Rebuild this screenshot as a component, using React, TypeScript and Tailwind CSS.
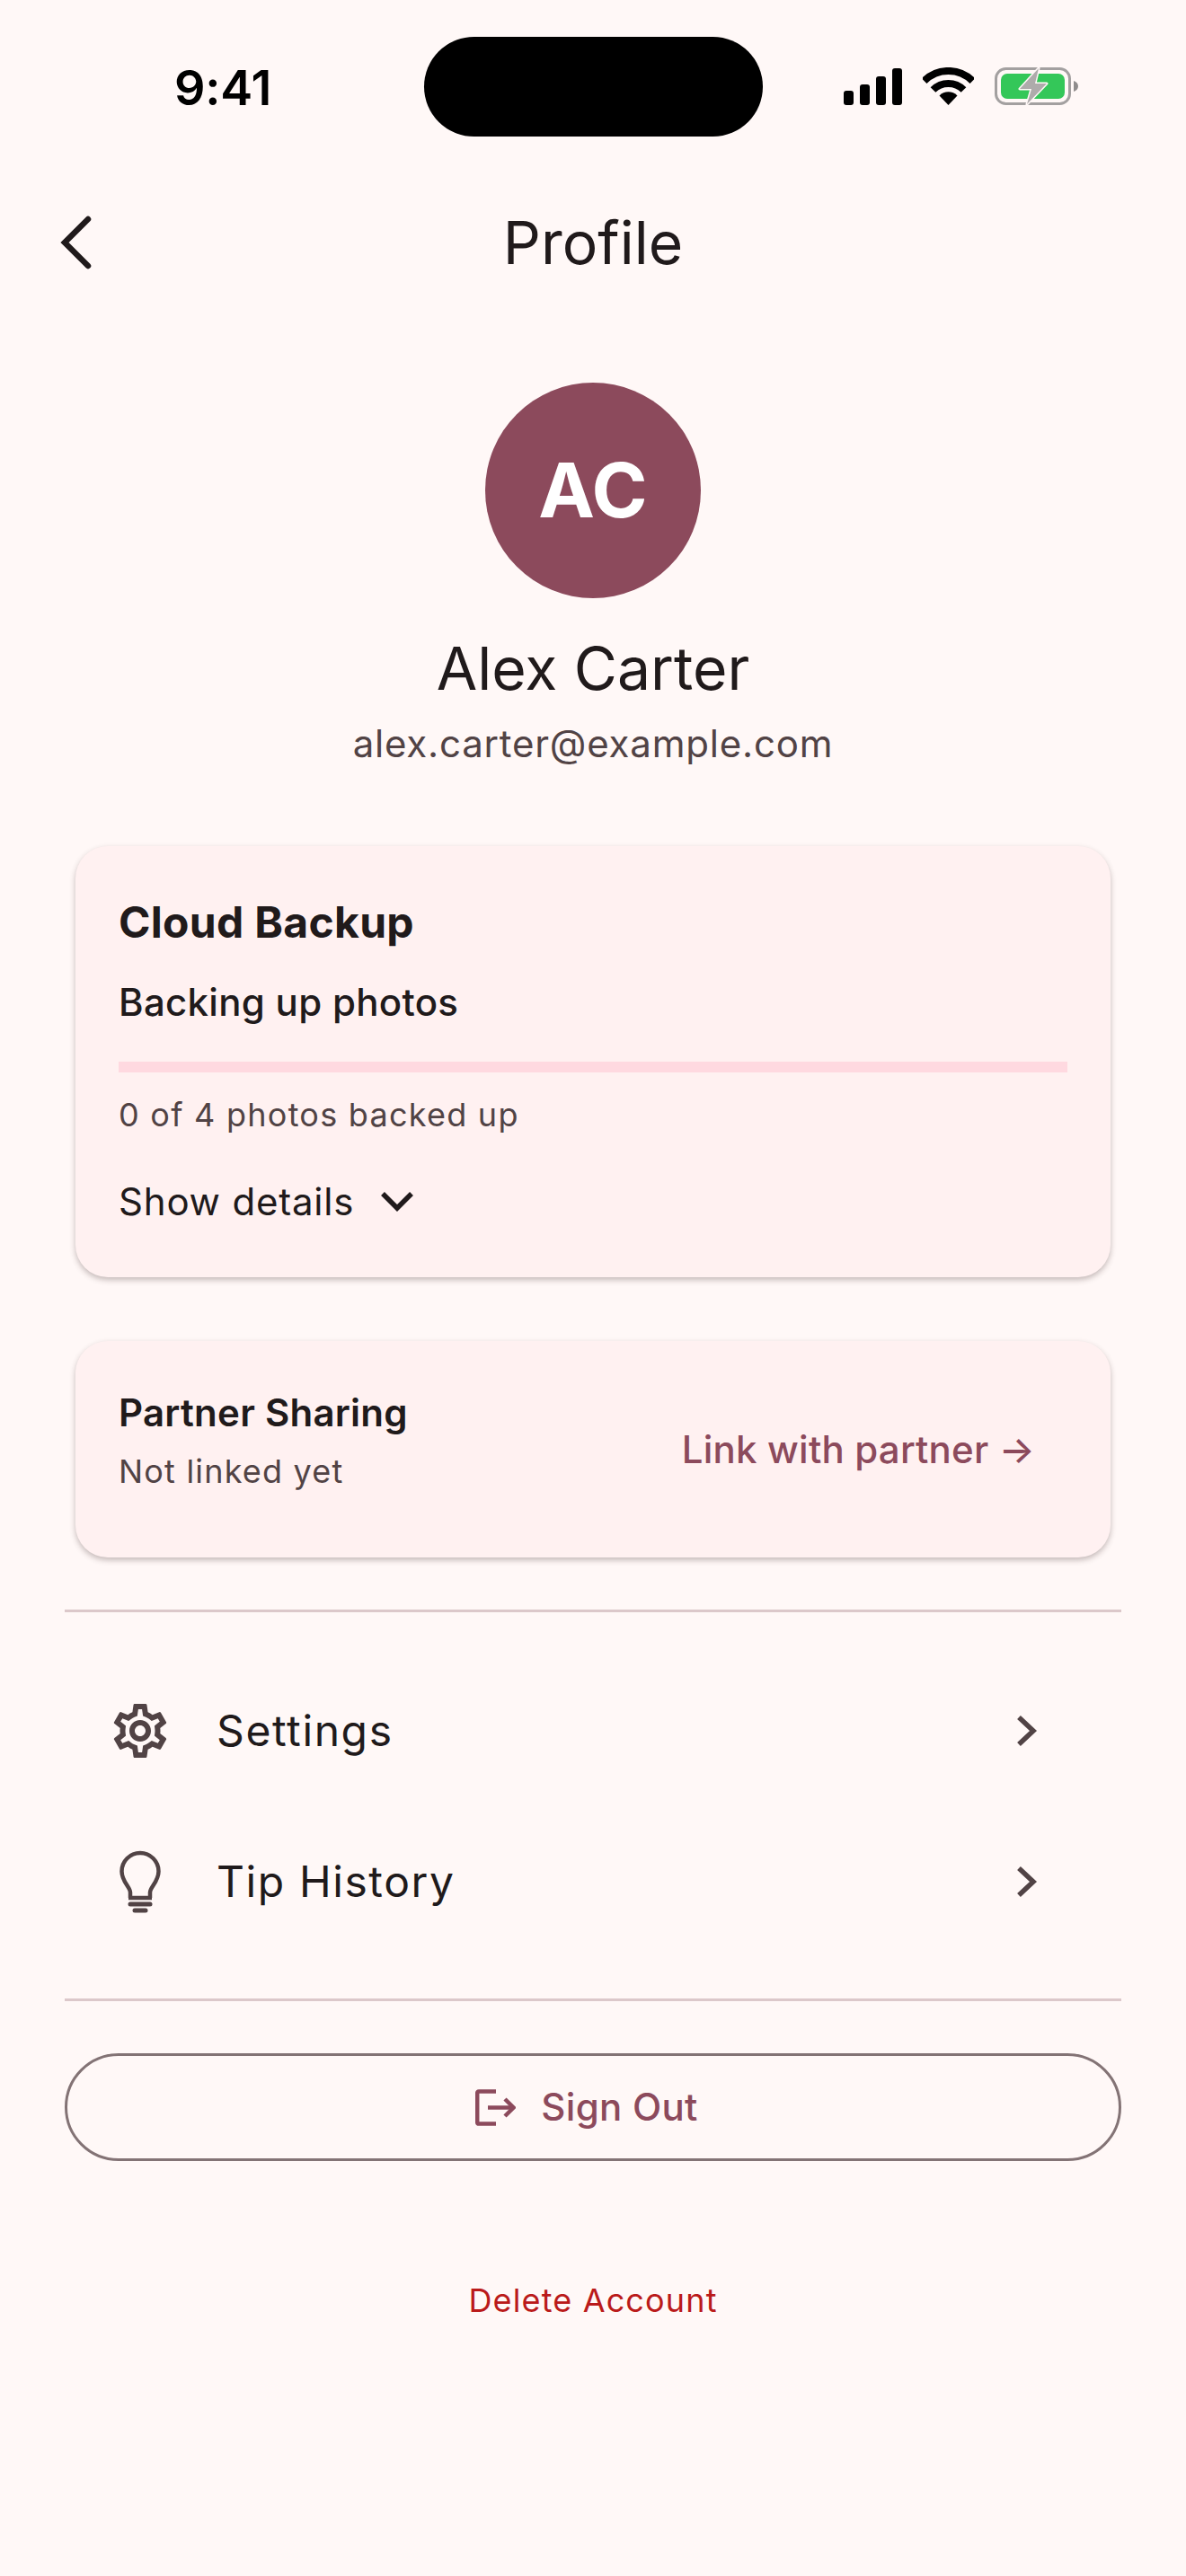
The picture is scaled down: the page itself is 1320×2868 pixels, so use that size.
import { MdOutlineSettings } from "react-icons/md";

function Signal() {
  return (
    <svg width="65" height="41" viewBox="0 0 65 41" fill="#000">
      <rect x="0" y="25" width="11" height="16" rx="3" />
      <rect x="18" y="18" width="11" height="23" rx="3" />
      <rect x="36" y="9" width="11" height="32" rx="3" />
      <rect x="54" y="0" width="11" height="41" rx="3" />
    </svg>
  );
}

function Wifi() {
  return (
    <svg width="57" height="42" viewBox="0 0 57 42" fill="none" stroke="#000" strokeWidth="8">
      <path d="M1.6 15.1A38 38 0 0 1 55.4 15.1" />
      <path d="M11.5 25A24 24 0 0 1 45.5 25" />
      <path d="M28.5 42L18.5 31.5A14 14 0 0 1 38.5 31.5Z" fill="#000" stroke="none" />
    </svg>
  );
}

function Battery() {
  return (
    <svg width="93" height="42" viewBox="0 0 93 42" fill="none">
      <rect x="1.5" y="1.5" width="82" height="39" rx="11" stroke="#a3a0a0" strokeWidth="3" />
      <rect x="7" y="7" width="71" height="28" rx="7" fill="#34c759" />
      <path d="M88 15C91 16 93 18 93 21C93 24 91 26 88 27Z" fill="#8f8c8c" />
      <path
        d="M49 1L28 24L41 24L36 41L58 18L45 18Z"
        fill="#aeabab"
        stroke="#fff8f7"
        strokeWidth="3"
        strokeLinejoin="round"
        paintOrder="stroke"
      />
    </svg>
  );
}

function Bulb() {
  return (
    <svg width="46" height="70" viewBox="0 0 46 70" fill="none" stroke="#514345" strokeWidth="4.5">
      <path d="M12 53V47C12 41 2.5 35 2.5 23.5A20.5 20.5 0 0 1 43.5 23.5C43.5 35 34 41 34 47V53" />
      <path d="M10 53H36" />
      <path d="M12 60H34" strokeWidth="5" strokeLinecap="round" />
      <path d="M17 67H29" strokeWidth="5" strokeLinecap="round" />
    </svg>
  );
}

function RowChevron() {
  return (
    <svg width="24" height="36" viewBox="0 0 24 36" fill="none" stroke="#514345" strokeWidth="5.5">
      <path d="M3 3L19 18L3 33" />
    </svg>
  );
}

function SignOutIcon() {
  return (
    <svg width="45" height="41" viewBox="0 0 45 41" fill="none" stroke="#8c4a5c" strokeWidth="4.5">
      <path d="M23 2.5H4Q2.2 2.5 2.2 4.5V36.5Q2.2 38.5 4 38.5H23" />
      <path d="M14 20.5H42" />
      <path d="M33 11L42.5 20.5L33 30" />
    </svg>
  );
}

function MenuRow({ icon, label }: { icon: React.ReactNode; label: string }) {
  return (
    <div className="flex h-[168px] items-center">
      <div className="flex w-[72px] items-center justify-center">{icon}</div>
      <span className="ml-[49px] flex-1 text-[48px] leading-none tracking-[1.6px] text-[#201a1b]">{label}</span>
      <div className="mr-[93px]">
        <RowChevron />
      </div>
    </div>
  );
}

export default function App() {
  return (
    <div className="flex h-[2868px] w-[1320px] flex-col overflow-hidden bg-[#fff8f7] font-['Inter',sans-serif] text-[#201a1b]">
      <div className="flex h-[152px] items-end justify-between pl-[194px] pr-[120px]">
        <span className="mb-[27px] w-[108px] text-[54px] font-semibold leading-none tracking-[-0.2px] text-black">9:41</span>
        <div className="ml-[170px] mr-auto h-[111px] w-[377px] rounded-[56px] bg-black" />
        <div className="mb-[35px] flex items-center gap-[23px]">
          <Signal />
          <Wifi />
          <Battery />
        </div>
      </div>

      <div className="relative mt-[48px] flex h-[140px] items-center justify-center">
        <svg className="absolute left-[66px]" width="36" height="60" viewBox="0 0 36 60" fill="none" stroke="#201a1b" strokeWidth="6.5" strokeLinecap="round">
          <path d="M32 4L6 30L32 56" />
        </svg>
        <span className="text-[66px] leading-none">Profile</span>
      </div>

      <div className="mt-[86px] flex flex-col items-center">
        <div className="flex h-[240px] w-[240px] items-center justify-center rounded-full bg-[#8c4a5c] text-[84px] font-bold leading-none text-white">
          AC
        </div>
        <div className="mt-[42px] text-[66px] leading-[72px]">Alex Carter</div>
        <div className="mt-[24px] text-[42px] leading-[48px] tracking-[0.8px] text-[#514345]">alex.carter@example.com</div>
      </div>

      <div className="mx-[84px] mt-[90px] flex h-[480px] flex-col rounded-[36px] bg-[#fff1f1] px-[48px] pt-[60px] shadow-[0_3px_6px_rgba(60,40,40,0.3)]">
        <div className="text-[48px] font-bold leading-[50px] tracking-[0.3px]">Cloud Backup</div>
        <div className="mt-[40px] text-[42px] font-[450] leading-[48px] tracking-[0.3px]">Backing up photos</div>
        <div className="mt-[42px] h-[12px] bg-[#ffd9e0]" />
        <div className="mt-[26px] text-[36px] leading-[42px] tracking-[1.25px] text-[#514345]">0 of 4 photos backed up</div>
        <div className="mt-[52px] flex items-center">
          <span className="text-[42px] leading-[48px] tracking-[0.8px]">Show details</span>
          <svg className="ml-[30px]" width="36" height="24" viewBox="0 0 36 24" fill="none" stroke="#201a1b" strokeWidth="5.5">
            <path d="M2 3L18 19L34 3" />
          </svg>
        </div>
      </div>

      <div className="mx-[84px] mt-[71px] flex h-[241px] items-center justify-between rounded-[36px] bg-[#fff1f1] pl-[48px] pr-[84px] shadow-[0_3px_6px_rgba(60,40,40,0.3)]">
        <div className="mb-[20px]">
          <div className="text-[42px] font-semibold leading-[48px] tracking-[0.25px]">Partner Sharing</div>
          <div className="mt-[20px] text-[36px] leading-[42px] tracking-[1.2px] text-[#514345]">Not linked yet</div>
        </div>
        <div className="text-[42px] font-[450] leading-none tracking-[0.2px] text-[#8c4a5c]">Link with partner →</div>
      </div>

      <div className="mx-[72px] mt-[58px] h-[3px] bg-[#dcc8ca]" />

      <div className="ml-[120px] mr-[72px] mt-[48px]">
        <MenuRow icon={<MdOutlineSettings size={72} color="#514345" />} label="Settings" />
        <MenuRow icon={<Bulb />} label="Tip History" />
      </div>

      <div className="mx-[72px] mt-[46px] h-[3px] bg-[#dcc8ca]" />

      <div className="mx-[72px] mt-[58px] flex h-[120px] items-center justify-center gap-[28px] rounded-full border-[3px] border-[#837375] pr-[14px]">
        <SignOutIcon />
        <span className="text-[42px] font-[450] leading-none tracking-[0.3px] text-[#8c4a5c]">Sign Out</span>
      </div>

      <div className="mt-[134px] text-center text-[36px] leading-[42px] tracking-[1.15px] text-[#ba1a1a]">Delete Account</div>
    </div>
  );
}
